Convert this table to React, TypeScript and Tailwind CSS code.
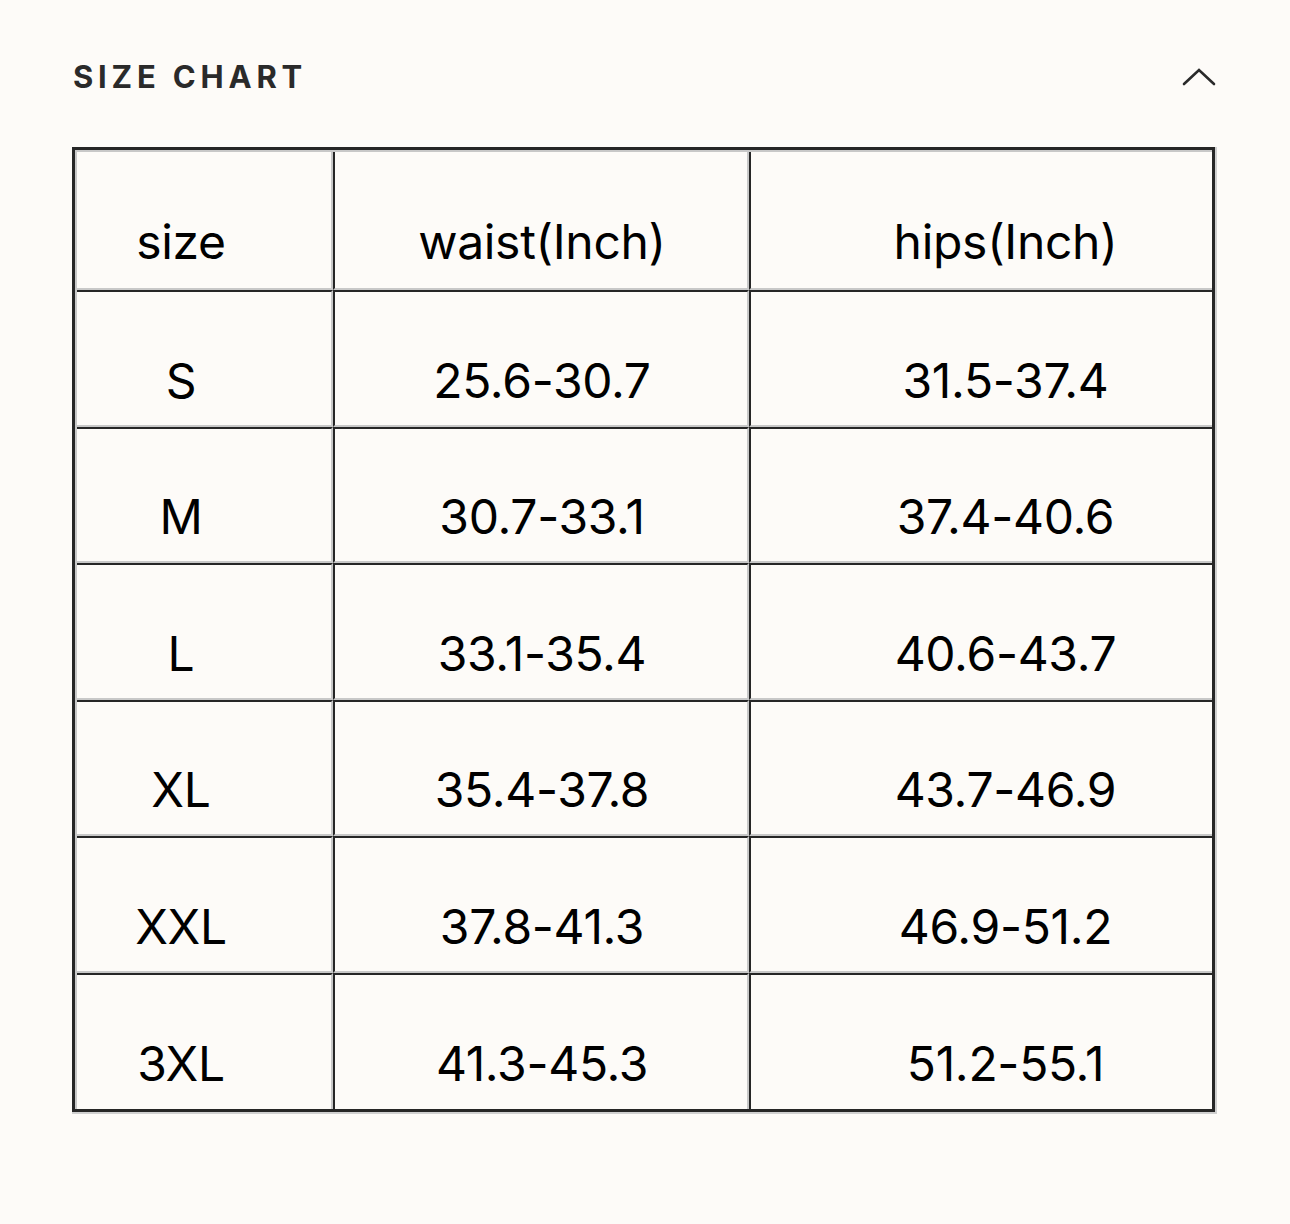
import React from "react";

const rows = [
  ["S", "25.6-30.7", "31.5-37.4"],
  ["M", "30.7-33.1", "37.4-40.6"],
  ["L", "33.1-35.4", "40.6-43.7"],
  ["XL", "35.4-37.8", "43.7-46.9"],
  ["XXL", "37.8-41.3", "46.9-51.2"],
  ["3XL", "41.3-45.3", "51.2-55.1"],
];

const heights = ["h-[137px]", "h-[136px]", "h-[137px]", "h-[136px]", "h-[137px]", "h-[136px]"];

function Cell({
  children,
  col,
  last,
  first,
  h,
}: {
  children: React.ReactNode;
  col: number;
  last: boolean;
  first: boolean;
  h: string;
}) {
  const border = [
    col > 0 ? "border-l-2 border-l-[#262626]" : "",
    col < 2 ? "border-r-2 border-r-[#c8c8c8]" : "",
    !first ? "border-t-2 border-t-[#262626]" : "",
    !last ? "border-b-2 border-b-[#c8c8c8]" : "",
  ].join(" ");
  const pad = col === 0 ? "pr-[46px]" : col === 2 ? "pl-[48px]" : "pl-[2px]";
  return (
    <div
      className={`${h} ${border} ${pad} bg-[#fdfbf8] flex items-center justify-center pt-[44px] text-[48px] leading-none text-black tracking-[-0.3px]`}
    >
      {children}
    </div>
  );
}

export default function App() {
  return (
    <div
      className="min-h-[1224px] w-full bg-[#fdfbf8]"
      style={{ fontFamily: "Inter, 'Noto Sans', sans-serif" }}
    >
      <div className="flex items-center justify-between pl-[73px] pr-[74px] pt-[60px] h-[92px]">
        <h2 className="text-[31px] font-bold tracking-[0.155em] text-[#2a2a2a] leading-none">
          SIZE CHART
        </h2>
        <svg width="34" height="20" viewBox="0 0 34 20" className="mt-[2px]">
          <path d="M2 17 L17 3 L32 17" fill="none" stroke="#2a2a2a" strokeWidth="2.6" strokeLinecap="round" strokeLinejoin="miter" />
        </svg>
      </div>
      <div className="ml-[72px] mt-[55px] w-[1143px] border-[3px] border-[#262626] bg-[#c8c8c8] pl-[2px] pt-[2px] shadow-[1px_1px_0_1px_#d0d0d0]">
        <div className="grid grid-cols-[256px_416px_1fr]">
          {[["size", "waist(Inch)", "hips(Inch)"], ...rows].map((r, i) => (
            <React.Fragment key={i}>
              {r.map((c, j) => (
                <Cell
                  key={j}
                  col={j}
                  first={i === 0}
                  last={i === rows.length}
                  h={i === 0 ? "h-[138px]" : heights[i - 1]}
                >
                  {c}
                </Cell>
              ))}
            </React.Fragment>
          ))}
        </div>
      </div>
    </div>
  );
}
